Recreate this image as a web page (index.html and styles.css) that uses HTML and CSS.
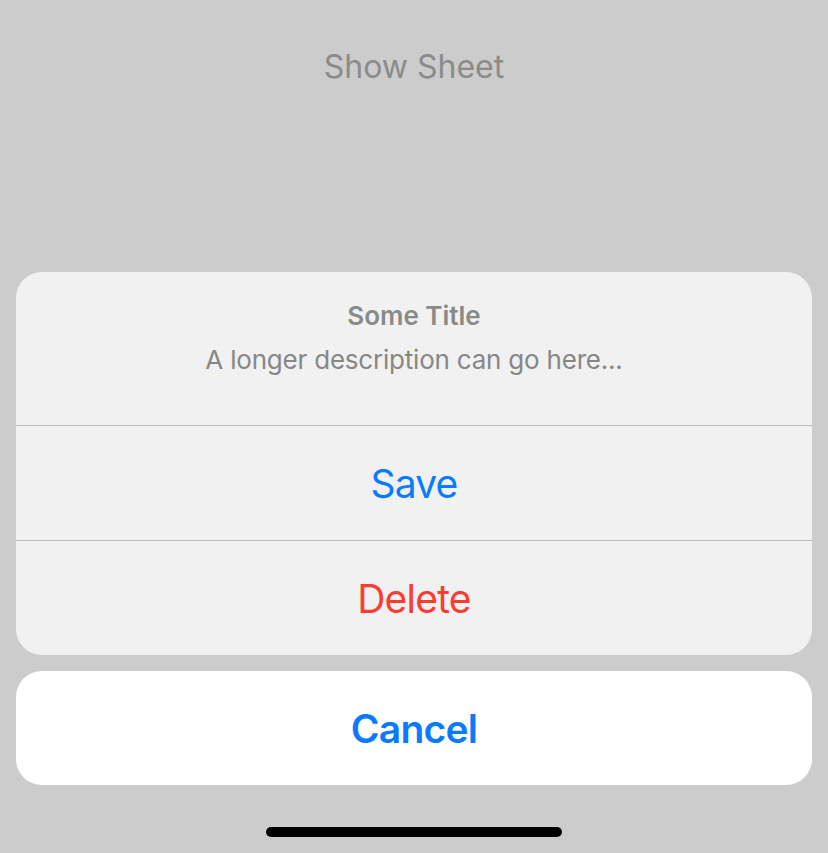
FILE: index.html
```html
<!DOCTYPE html>
<html lang="en">
<head>
<meta charset="utf-8">
<title>Show Sheet</title>
<link rel="stylesheet" href="styles.css">
</head>
<body>
<div class="screen">
  <div class="top">
    <span class="show-btn">Show Sheet</span>
  </div>
  <div class="sheet">
    <div class="group">
      <div class="header">
        <div class="title">Some Title</div>
        <div class="message">A longer description can go here...</div>
      </div>
      <div class="action action-default">Save</div>
      <div class="action action-destructive">Delete</div>
    </div>
    <div class="cancel">Cancel</div>
  </div>
  <div class="home-area">
    <div class="home-bar"></div>
  </div>
</div>
</body>
</html>
```
FILE: styles.css
```css
html, body {
  margin: 0;
  padding: 0;
}
body {
  background: #cccccc;
  font-family: Inter, "Noto Sans", "Liberation Sans", sans-serif;
}
.screen {
  height: 853px;
  display: flex;
  flex-direction: column;
  overflow: hidden;
}
.top {
  padding-top: 48px;
  display: flex;
  justify-content: center;
}
.show-btn {
  font-size: 32px;
  line-height: 38px;
  color: #8b8b8b;
}
.sheet {
  margin-top: auto;
  padding: 0 16px;
  display: flex;
  flex-direction: column;
  gap: 16px;
}
.group {
  background: #f0f1f0;
  border-radius: 26px;
  overflow: hidden;
  display: flex;
  flex-direction: column;
}
.header {
  height: 154px;
  box-sizing: border-box;
  padding-top: 28px;
  display: flex;
  flex-direction: column;
  align-items: center;
  gap: 12px;
  border-bottom: 1px solid #b9b9b9;
}
.title {
  font-size: 26px;
  line-height: 32px;
  font-weight: 600;
  color: #8a8a8a;
}
.message {
  font-size: 26px;
  line-height: 32px;
  color: #878787;
  letter-spacing: -0.008em;
}
.action {
  height: 114px;
  display: flex;
  align-items: center;
  justify-content: center;
  font-size: 39px;
  letter-spacing: -0.02em;
}
.action-default {
  color: #0a7aff;
  border-bottom: 1px solid #b9b9b9;
}
.action-destructive {
  color: #ff3b30;
}
.cancel {
  height: 114px;
  background: #ffffff;
  border-radius: 26px;
  display: flex;
  align-items: center;
  justify-content: center;
  font-size: 39px;
  font-weight: 600;
  color: #0a7aff;
  letter-spacing: -0.02em;
}
.home-area {
  height: 68px;
  display: flex;
  justify-content: center;
  align-items: flex-start;
  padding-top: 42px;
  box-sizing: border-box;
}
.home-bar {
  width: 296px;
  height: 10px;
  border-radius: 5px;
  background: #000000;
}
```
